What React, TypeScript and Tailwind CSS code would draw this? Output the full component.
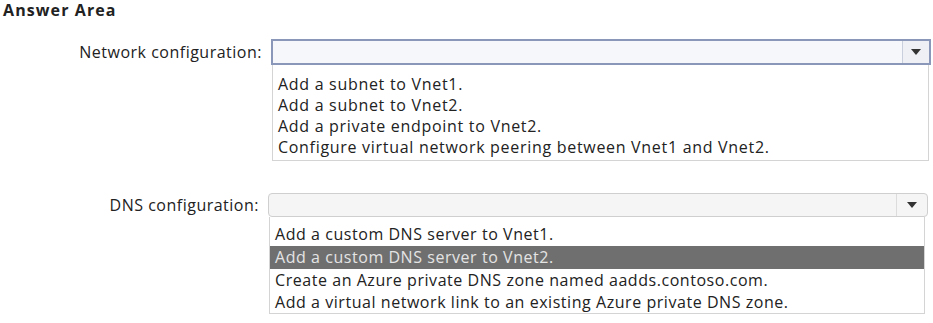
import React from "react";

const font = { fontFamily: '"Open Sans", "Noto Sans", sans-serif' };

function Arrow() {
  return (
    <svg width="10" height="6" viewBox="0 0 10 6">
      <path d="M0 0 H10 L5 6 Z" fill="#333" />
    </svg>
  );
}

export default function App() {
  return (
    <div className="w-[933px] h-[323px] bg-white text-[#222] overflow-hidden" style={font}>
      <div className="pl-[3px] h-[20px] text-[16px] font-bold leading-[20px] tracking-[1.1px]">Answer Area</div>

      <div className="mt-[19px] flex">
        <div className="w-[271px] shrink-0 text-right pr-[9px] text-[16px] tracking-[0.5px] leading-[26px]">Network configuration:</div>
        <div className="w-[660px]">
          <div className="h-[26px] flex border-2 border-[#8a97b8] bg-[#f6f7fb]">
            <div className="flex-1" />
            <div className="w-[27px] border-l border-[#c9cfdd] bg-[#eef0f6] flex items-center justify-center">
              <Arrow />
            </div>
          </div>
          <div className="w-[657px] ml-[1px] border-x border-b border-[#d4d4d4] pt-[9px] pb-[2px] text-[16px] tracking-[0.7px] leading-[21px]">
            <div className="pl-[5px]">Add a subnet to Vnet1.</div>
            <div className="pl-[5px]">Add a subnet to Vnet2.</div>
            <div className="pl-[5px]">Add a private endpoint to Vnet2.</div>
            <div className="pl-[5px]">Configure virtual network peering between Vnet1 and Vnet2.</div>
          </div>
        </div>
      </div>

      <div className="mt-[32px] flex">
        <div className="w-[268px] shrink-0 text-right pr-[9px] text-[16px] tracking-[0.5px] leading-[24px]">DNS configuration:</div>
        <div className="w-[660px]">
          <div className="h-[24px] flex border border-[#cfcfcf] rounded-[4px] bg-[#f5f5f5]">
            <div className="flex-1" />
            <div className="w-[31px] border-l border-[#dcdcdc] flex items-center justify-center">
              <Arrow />
            </div>
          </div>
          <div className="w-[656px] ml-[1px] border-x border-b border-[#d4d4d4] pt-[6px] text-[16px] tracking-[0.55px]">
            <div className="pl-[5px] h-[23px] leading-[23px]">Add a custom DNS server to Vnet1.</div>
            <div className="pl-[5px] bg-[#6f6f6f] text-[#e4e4e4] h-[23px] leading-[23px]">Add a custom DNS server to Vnet2.</div>
            <div className="pl-[5px] h-[22px] leading-[22px]">Create an Azure private DNS zone named aadds.contoso.com.</div>
            <div className="pl-[5px] h-[22px] leading-[22px]">Add a virtual network link to an existing Azure private DNS zone.</div>
          </div>
        </div>
      </div>
    </div>
  );
}
